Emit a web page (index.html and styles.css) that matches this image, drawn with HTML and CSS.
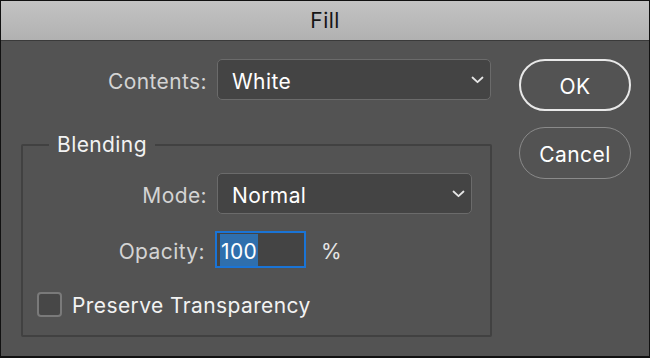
FILE: index.html
```html
<!DOCTYPE html>
<html lang="en">
<head>
  <meta charset="UTF-8" />
  <title>Fill</title>
  <link rel="stylesheet" href="styles.css">
</head>
<body>
  <div class="window">
    <div class="titlebar">Fill</div>

    <div class="dialog">
      <div class="main">
        <div class="row row-contents">
          <span class="label">Contents:</span>
          <div class="select select-wide">
            <span>White</span>
            <svg class="chevron" width="13" height="8" viewBox="0 0 13 8"><path d="M1.5 1.5 L6.5 6.2 L11.5 1.5" fill="none" stroke="#e6e6e6" stroke-width="1.8" stroke-linecap="round" stroke-linejoin="round"/></svg>
          </div>
        </div>

        <fieldset class="group">
          <legend>Blending</legend>

          <div class="row row-mode">
            <span class="label">Mode:</span>
            <div class="select select-mode">
              <span>Normal</span>
              <svg class="chevron" width="13" height="8" viewBox="0 0 13 8"><path d="M1.5 1.5 L6.5 6.2 L11.5 1.5" fill="none" stroke="#e6e6e6" stroke-width="1.8" stroke-linecap="round" stroke-linejoin="round"/></svg>
            </div>
          </div>

          <div class="row row-opacity">
            <span class="label">Opacity:</span>
            <div class="number-input"><span class="selected">100</span></div>
            <span class="unit">%</span>
          </div>

          <label class="check-row">
            <span class="checkbox"></span>
            <span class="check-text">Preserve Transparency</span>
          </label>
        </fieldset>
      </div>

      <div class="buttons">
        <button class="btn btn-ok">OK</button>
        <button class="btn btn-cancel">Cancel</button>
      </div>
    </div>
  </div>
</body>
</html>
```

FILE: styles.css
```css
html, body {
  margin: 0;
  padding: 0;
  background-color: #000;
}

body {
  font-family: 'Inter', 'Liberation Sans', sans-serif;
  font-size: 21px;
  letter-spacing: 0.4px;
  color: #f2f2f2;
}

.window {
  width: 650px;
  height: 358px;
  box-sizing: border-box;
  border: 1px solid #111;
  border-bottom-width: 2px;
  background-color: #535353;
  overflow: hidden;
}

.titlebar {
  height: 39px;
  line-height: 39px;
  text-align: center;
  font-size: 21px;
  color: #151515;
  background: linear-gradient(to bottom, #c3c3c3, #b1b1b1);
  border-bottom: 1px solid #3a3a3a;
}

.dialog {
  display: flex;
  padding: 18px 0 0 20px;
}

.main {
  width: 471px;
}

.row {
  display: flex;
  align-items: center;
}

.label {
  width: 196px;
  padding: 3px 10px 0 0;
  box-sizing: border-box;
  text-align: right;
  color: #d4d4d4;
}

.select {
  display: flex;
  align-items: center;
  justify-content: space-between;
  box-sizing: border-box;
  height: 41px;
  padding: 0 6px 0 14px;
  background-color: #444;
  border: 1px solid #6b6b6b;
  border-radius: 5px;
  color: #fff;
}

.select span {
  padding-top: 3px;
}

.select-wide {
  width: 274px;
}

.chevron {
  display: block;
}

/* group box */
.group {
  margin: 32px 0 0;
  padding: 0;
  height: 205px;
  box-sizing: border-box;
  border: 2px solid #414141;
  border-radius: 2px;
}

.group legend {
  margin-left: 26px;
  padding: 0 8px;
  color: #f2f2f2;
}

.row-mode {
  margin-top: 16px;
}

.row-mode .label {
  width: 194px;
}

.select-mode {
  width: 255px;
  height: 41px;
}

.row-opacity {
  margin-top: 17px;
}

.row-opacity .label {
  width: 192px;
}

.number-input {
  box-sizing: border-box;
  width: 91px;
  height: 37px;
  padding: 0 0 0 3px;
  display: flex;
  align-items: center;
  background-color: #444;
  border: 2px solid #1a74d6;
  color: #fff;
}

.selected {
  background-color: #2f6fad;
  padding: 3px 1px 0;
  line-height: 29px;
}

.unit {
  margin-left: 15px;
  padding-top: 3px;
  color: #e6e6e6;
}

.check-row {
  display: flex;
  align-items: center;
  margin: 22px 0 0 14px;
  color: #f2f2f2;
}

.check-text {
  padding-top: 3px;
}

.checkbox {
  width: 25px;
  height: 25px;
  margin-right: 10px;
  box-sizing: border-box;
  border: 2px solid #7a7a7a;
  border-radius: 4px;
  background-color: #474747;
}

/* buttons */
.buttons {
  display: flex;
  flex-direction: column;
  gap: 16px;
  margin-left: 27px;
}

.btn {
  width: 112px;
  height: 52px;
  padding-top: 3px;
  border-radius: 26px;
  background-color: #535353;
  font-family: 'Inter', 'Liberation Sans', sans-serif;
  font-size: 21px;
  letter-spacing: 0.4px;
  color: #fff;
  cursor: pointer;
}

.btn-ok {
  border: 2px solid #e8e8e8;
}

.btn-cancel {
  border: 1px solid #8a8a8a;
}
```
